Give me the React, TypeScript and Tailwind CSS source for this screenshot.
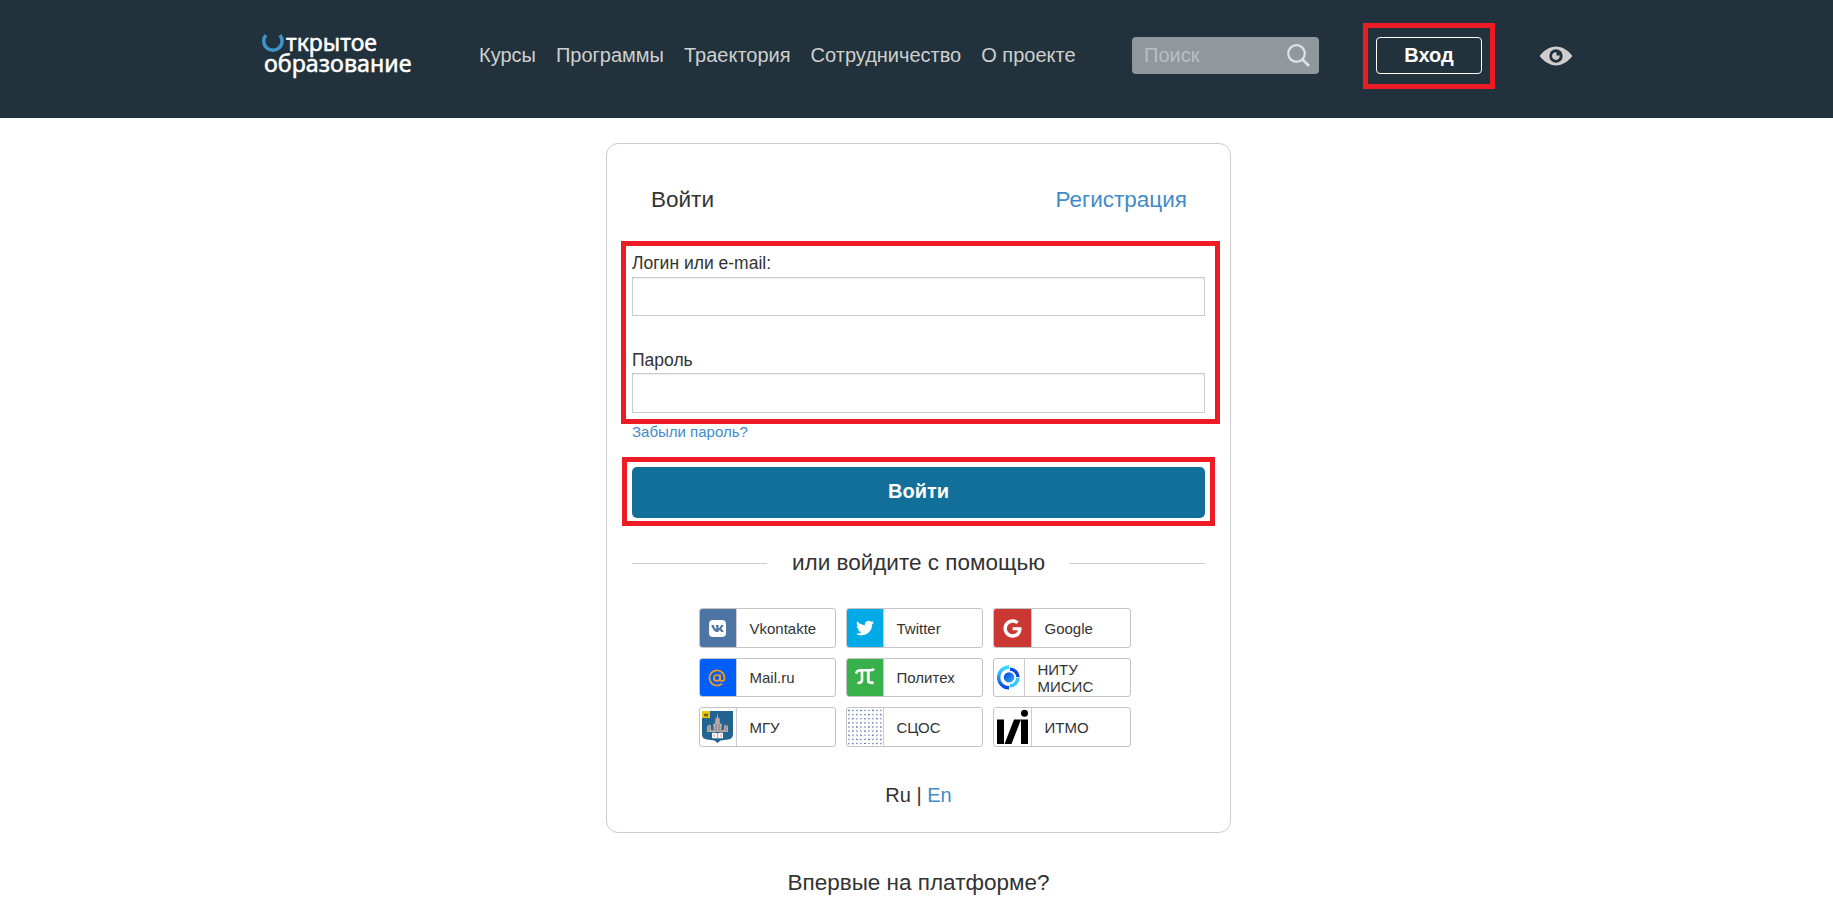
import React from "react";
import { FaGoogle, FaTwitter, FaVk } from "react-icons/fa";
import { AtSign } from "lucide-react";

function Logo() {
  return (
    <svg className="block h-[52px] w-[156px] overflow-visible" viewBox="0 0 156 52">
      <path d="M3.900 1.200A9.200 9.200 0 1 0 17.900 1.200" fill="none" stroke="#3f93cb" strokeWidth="3.500" />
      <g fill="#fff" fontFamily="'Noto Sans', 'Open Sans', sans-serif" fontSize="23" stroke="#fff" strokeWidth=".5">
        <text x="24" y="16.700" textLength="91" lengthAdjust="spacingAndGlyphs">ткрытое</text>
        <text x="2" y="38" textLength="147.500" lengthAdjust="spacingAndGlyphs">образование</text>
      </g>
    </svg>
  );
}

function SearchIcon() {
  return (
    <svg className="block h-[23px] w-[23px]" viewBox="0 0 23 23" fill="none" stroke="#dfe2e4" strokeWidth="2.2">
      <circle cx="9.5" cy="9.5" r="8.3" />
      <path d="M15 15l7 7" strokeWidth="2.6" />
    </svg>
  );
}

function EyeIcon() {
  return (
    <svg className="block h-[20px] w-[34px]" viewBox="0 0 34 20">
      <path d="M.6 10C5 4.500 10.500.6 17 .6S29 4.500 33.400 10C29 15.500 23.500 19.400 17 19.400S5 15.500.6 10z" fill="#d0cdcd" />
      <circle cx="17" cy="10" r="6.700" fill="#22323c" />
      <path d="M17.400 6.200A3.900 3.900 0 1 0 20.800 9.600L17.600 9.400z" fill="#d0cdcd" />
    </svg>
  );
}

function VkIcon() {
  return (
    <div className="flex h-[17px] w-[17px] items-center justify-center rounded-[4px] bg-white">
      <FaVk className="text-[13px] text-[#4c75a3]" />
    </div>
  );
}

function PiIcon() {
  return (
    <svg className="block h-[17px] w-[20px] -translate-y-px" viewBox="0 0 20 17" fill="none" stroke="#fff">
      <path d="M.8 5.500C2 2.600 3.500 2.300 6 2.300h8.500c2.200 0 3.500-.3 4.500-1.500" strokeWidth="2.600" />
      <path d="M7 3v9c0 2-1.400 3-4.500 3" strokeWidth="2.600" />
      <path d="M13.300 3v9.500c0 2 2 2.700 5.200 2" strokeWidth="2.900" />
    </svg>
  );
}

function MisisIcon() {
  return (
    <svg className="block h-[25px] w-[24px]" viewBox="0 0 24 25" fill="none">
      <defs>
        <linearGradient id="misis" x1="0" y1="0" x2="0" y2="1">
          <stop offset="0" stopColor="#3ddcff" />
          <stop offset="1" stopColor="#0a45e8" />
        </linearGradient>
        <linearGradient id="misisInner" x1="0" y1="0" x2="1" y2="1">
          <stop offset="0" stopColor="#0838dc" />
          <stop offset="1" stopColor="#2bb9f8" />
        </linearGradient>
      </defs>
      <path d="M12 2A10.300 10.300 0 0 0 12 22.800" stroke="url(#misis)" strokeWidth="3.400" />
      <path d="M13 4.100A8.500 8.500 0 0 1 21 12" stroke="#0b48e8" strokeWidth="3.400" />
      <path d="M21 12.600A8.500 8.500 0 0 1 12.500 20.900" stroke="#38c8fb" strokeWidth="3.400" />
      <circle cx="12" cy="12.400" r="5.200" fill="url(#misisInner)" />
    </svg>
  );
}

function MguIcon() {
  return (
    <svg className="block h-[32px] w-[31px]" viewBox="0 0 31 32">
      <path d="M0 0h31v23c0 3.500-2 5-5 5.500l-7.500 1L15.500 32l-3-2.500-7.500-1c-3-.5-5-2-5-5.500z" fill="#22638f" />
      <path d="M0 0h8v7H0z" fill="#e8c80e" />
      <path d="M1.500 2.500l2 .8L4 1.500l.6 1.800 2-.8-1 3H2.500z" fill="#7b5a1a" />
      <path d="M15.500 1.500l.7 5 1.600 1.500v4l2.200 1.500v5.500h2v-4l1.500-1.500 1.500 1.500 1-.5v6.500H5v-6.500l1 .5 1.500-1.500L9 14.500V19h2v-5.500l2.200-1.500V8l1.600-1.500z" fill="#b7aaa4" />
      <path d="M14 13v7M17 13v7M11.500 15v5M19.500 15v5M7 15v5M24 15v5" stroke="#6c7c8c" strokeWidth=".8" />
      <path d="M10 22c2-.6 4-.4 5.500.5 1.500-.9 3.500-1.100 5.500-.5v5.300H10z" fill="#fff" />
      <path d="M12 23v3M15.500 22.500v5M19 23v3" stroke="#d7808c" strokeWidth=".9" />
    </svg>
  );
}

function ScosIcon() {
  return (
    <svg className="block h-[38px] w-[37px]" viewBox="0 0 37 38">
      {Array.from({ length: 81 }, (_, i) => {
        const col = i % 9;
        const row = Math.floor(i / 9);
        const x = 2 + col * 4.1;
        const y = 2 + row * 4.25;
        const angle = (Math.atan2(row - 4, col - 4) * 180) / Math.PI + 90;
        return (
          <path
            key={i}
            d={`M${x - 1} ${y}h2`}
            transform={`rotate(${angle} ${x} ${y})`}
            stroke={(col + row) % 3 ? "#8496bb" : "#4c70b5"}
            strokeWidth="1.2"
          />
        );
      })}
    </svg>
  );
}

function ItmoIcon() {
  return (
    <svg className="block h-[35px] w-[31px] -translate-y-[0.5px]" viewBox="0 0 31 35">
      <path d="M0 10h7v24.500H0zM24 10h7v24.500h-7zM17 10h7L14.500 34.500h-7z" fill="#000" />
      <circle cx="27.500" cy="3.700" r="3.500" fill="#000" />
    </svg>
  );
}

type Provider = { name: string; tile: string; icon: React.ReactNode };

const providers: Provider[] = [
  { name: "Vkontakte", tile: "w-[37px] pr-[2px] bg-[#4c75a3]", icon: <VkIcon /> },
  { name: "Twitter", tile: "w-[37px] bg-[#00aae6]", icon: <FaTwitter className="text-[18px] text-white" /> },
  { name: "Google", tile: "w-[38px] bg-[#cb3732]", icon: <FaGoogle className="text-[19px] text-white" /> },
  { name: "Mail.ru", tile: "w-[37px] pr-[2px] bg-[#005ff9]", icon: <AtSign size={18} strokeWidth={2.3} color="#f79a1c" /> },
  { name: "Политех", tile: "w-[37px] bg-[#39b14a]", icon: <PiIcon /> },
  { name: "НИТУ МИСИС", tile: "w-[31px]", icon: <MisisIcon /> },
  { name: "МГУ", tile: "w-[37px] pr-[2px]", icon: <MguIcon /> },
  { name: "СЦОС", tile: "w-[37px]", icon: <ScosIcon /> },
  { name: "ИТМО", tile: "w-[38px]", icon: <ItmoIcon /> },
];

const links = ["Курсы", "Программы", "Траектория", "Сотрудничество", "О проекте"];

function Header() {
  return (
    <header className="flex h-[118px] items-start bg-[#22323c] pl-[262px] text-[20px] text-[#cfcfcf]">
      <div className="mt-[34px] w-[217px]">
        <Logo />
      </div>
      <nav className="mt-[36px] flex h-[37px] w-[653px] items-center gap-[20px] whitespace-nowrap">
        {links.map((l) => (
          <a key={l} href="#">{l}</a>
        ))}
      </nav>
      <div className="mt-[37px] flex h-[37px] w-[187px] items-center justify-between rounded-[4px] bg-[#90989d] pr-[9px] pl-[12px] text-[#b9bfc3]">
        <span className="pb-[2px]">Поиск</span>
        <SearchIcon />
      </div>
      <div className="mt-[23px] ml-[44px] flex h-[66px] w-[132px] justify-center border-[5px] border-[#ed1c24] pt-[9px]">
        <button className="h-[37px] w-[106px] rounded-[4px] border border-white pb-px font-bold text-white">Вход</button>
      </div>
      <div className="mt-[46px] ml-[44px]">
        <EyeIcon />
      </div>
    </header>
  );
}

export default function App() {
  return (
    <div className="h-[915px] overflow-hidden bg-white font-['Liberation_Sans',Arial,sans-serif] text-[#333]">
      <Header />
      <main className="flex flex-col items-center pl-[4px]">
        <section className="mt-[25px] h-[690px] w-[625px] rounded-[12px] border border-[#ccc] px-[25px]">
          <div className="flex h-[97px] items-center justify-between pt-[15px] pr-[18px] pl-[19px] text-[22.5px]">
            <span>Войти</span>
            <a href="#" className="text-[#428bca]">Регистрация</a>
          </div>
          <div className="-mr-[15px] -ml-[11px] h-[183px] border-[5px] border-[#ed1c24] pt-[7px] pr-[10px] pl-[6px]">
            <label className="block h-[24px] text-[17.5px] leading-[20px]">Логин или e-mail:</label>
            <input className="block h-[39px] w-full border border-[#ccc] shadow-[inset_0_1px_1px_rgba(0,0,0,0.075)]" />
            <label className="mt-[34px] block h-[23px] text-[17.5px] leading-[20px]">Пароль</label>
            <input className="block h-[40px] w-full border border-[#ccc] shadow-[inset_0_1px_1px_rgba(0,0,0,0.075)]" />
          </div>
          <a href="#" className="block h-[33px] text-[15px] leading-[15px] text-[#428bca]">Забыли пароль?</a>
          <div className="-mr-[10px] -ml-[10px] h-[69px] border-[5px] border-[#ed1c24] pt-[5px] pr-[5px] pl-[5px]">
            <button className="block h-[51px] w-full rounded-[5px] bg-[#126f9a] pb-[3px] text-[20px] font-bold text-white">Войти</button>
          </div>
          <div className="mt-[19px] flex h-[36px] items-center justify-between">
            <div className="h-px w-[135px] bg-[#ccc]" />
            <span className="text-[22.5px]">или войдите с помощью</span>
            <div className="h-px w-[135px] bg-[#ccc]" />
          </div>
          <div className="mt-[27px] ml-[67px] grid w-[432px] grid-cols-[137px_137px_138px] grid-rows-[40px_39px_40px] gap-[10px]">
            {providers.map((p) => (
              <button key={p.name} className="flex overflow-hidden rounded-[3px] border border-[#c4c4c4] text-left text-[15px] leading-[17px]">
                <span className={`flex h-full shrink-0 items-center justify-center overflow-hidden border-r border-[#ccc] ${p.tile}`}>{p.icon}</span>
                <span className="flex h-full items-center pl-[12.5px]">{p.name}</span>
              </button>
            ))}
          </div>
          <div className="mt-[35px] text-center text-[20px] leading-[26px]">
            Ru | <a href="#" className="text-[#428bca]">En</a>
          </div>
        </section>
        <h2 className="mt-[36px] text-[22.5px] leading-[28px]">Впервые на платформе?</h2>
      </main>
    </div>
  );
}
